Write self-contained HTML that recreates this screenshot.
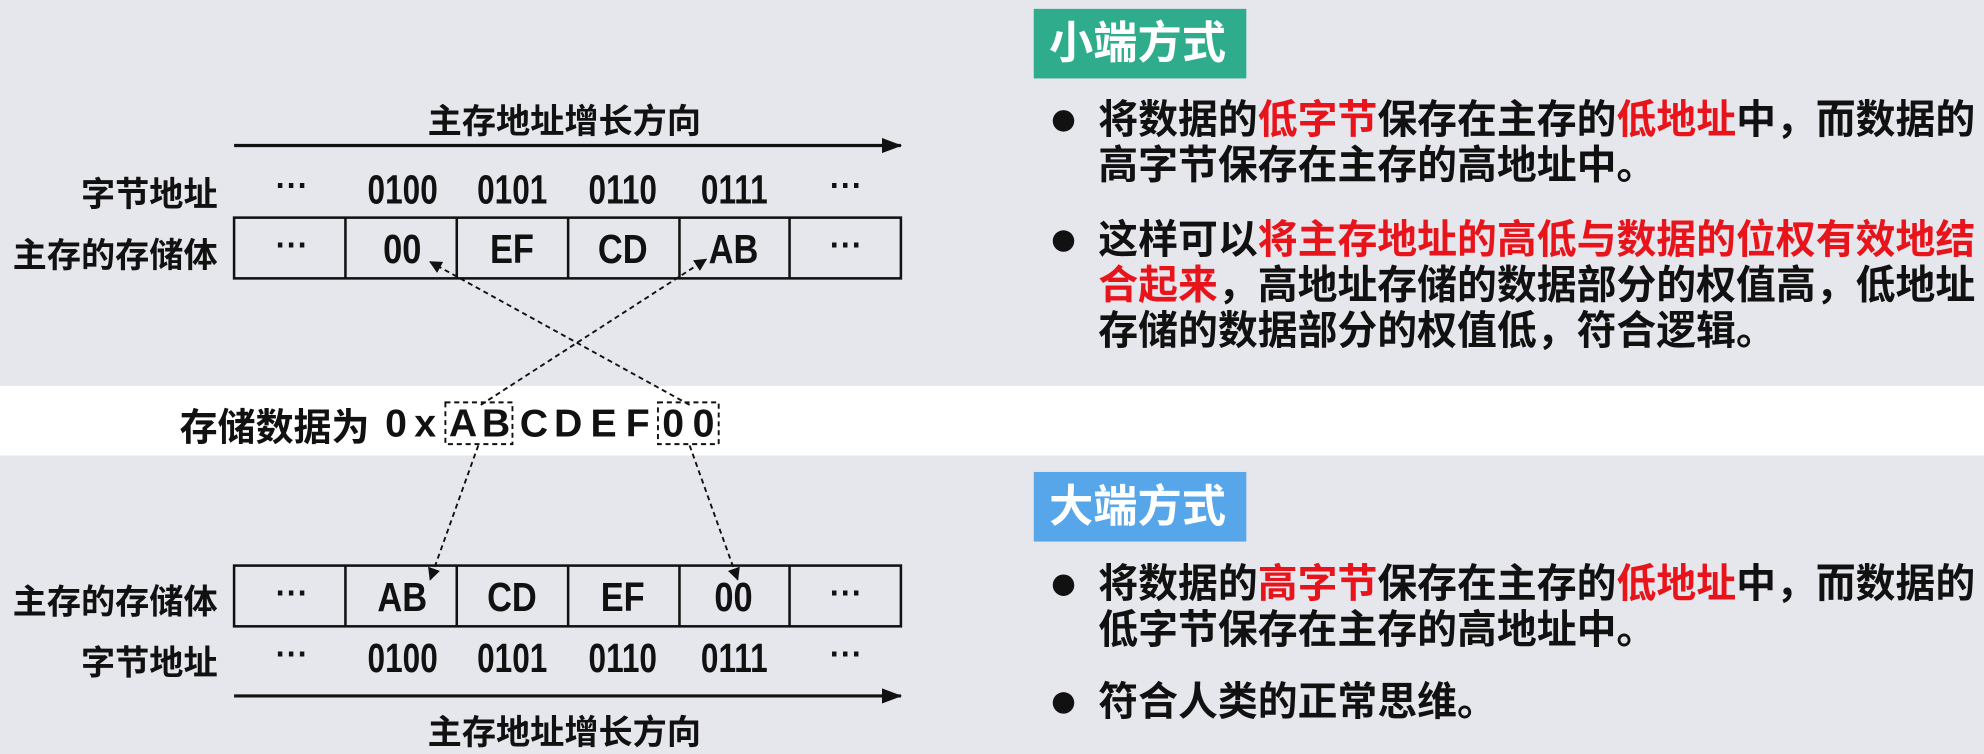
<!DOCTYPE html>
<html><head><meta charset="utf-8"><style>
html,body{margin:0;padding:0;width:1984px;height:740px;overflow:hidden;background:#e6e7ec}
#w{position:absolute;left:0;top:0;width:1568px;height:585px;transform:scale(1.26531);transform-origin:0 0;background:#e6e7ec;font-family:"Liberation Sans","Noto Sans CJK SC",sans-serif;font-weight:bold;color:#111}
.a{position:absolute;white-space:nowrap}
.r{color:#e8141c}
.tag{position:absolute;left:817px;width:168px;color:#fff;font-size:35px;line-height:55px;padding-left:12px;box-sizing:border-box}
.b{position:absolute;left:868px;font-size:31.5px;line-height:36px;width:700px}
.dot{position:absolute;left:832px;width:17px;height:17px;border-radius:50%;background:#111}
.lab{position:absolute;right:1396px;font-size:27px;white-space:nowrap}
</style></head><body><div id="w">
<div class="a" style="left:0;top:305px;width:1568px;height:55px;background:#fff"></div>
<svg class="a" style="left:0;top:0" width="1568" height="585" font-family="Liberation Sans, sans-serif" font-weight="bold">
<defs><marker id="m" markerWidth="10" markerHeight="10" refX="9" refY="5" orient="auto" markerUnits="userSpaceOnUse"><path d="M0,0 L10,5 L0,10z" fill="#111"/></marker>
<marker id="m2" markerWidth="16" markerHeight="12" refX="15" refY="6" orient="auto" markerUnits="userSpaceOnUse"><path d="M0,0 L16,6 L0,12z" fill="#111"/></marker></defs>
<g stroke="#111" stroke-width="2" fill="none">
<line x1="185" y1="115" x2="712" y2="115" stroke-width="2.5" marker-end="url(#m2)"/>
<rect x="185" y="172" width="527" height="48"/>
<line x1="273" y1="172" x2="273" y2="220"/><line x1="361" y1="172" x2="361" y2="220"/><line x1="449" y1="172" x2="449" y2="220"/><line x1="537" y1="172" x2="537" y2="220"/><line x1="624" y1="172" x2="624" y2="220"/>
<rect x="185" y="447" width="527" height="48"/>
<line x1="273" y1="447" x2="273" y2="495"/><line x1="361" y1="447" x2="361" y2="495"/><line x1="449" y1="447" x2="449" y2="495"/><line x1="537" y1="447" x2="537" y2="495"/><line x1="624" y1="447" x2="624" y2="495"/>
<line x1="185" y1="550" x2="712" y2="550" stroke-width="2.5" marker-end="url(#m2)"/>
<g stroke-dasharray="4,3" stroke-width="1.5">
<line x1="380" y1="320" x2="558" y2="205" marker-end="url(#m)"/>
<line x1="545" y1="320" x2="340" y2="207" marker-end="url(#m)"/>
<line x1="378" y1="352" x2="340" y2="458" marker-end="url(#m)"/>
<line x1="545" y1="352" x2="583" y2="458" marker-end="url(#m)"/>
<rect x="352" y="318" width="53" height="33"/>
<rect x="520" y="318" width="48" height="33"/>
</g></g>
<g font-size="32" text-anchor="middle" fill="#111">
<g transform="translate(0,161)"><text x="230" font-size="26" y="-6">⋯</text><g transform="scale(0.78,1)"><text x="408">0100</text><text x="519">0101</text><text x="631">0110</text><text x="744">0111</text></g><text x="668" font-size="26" y="-6">⋯</text></g>
<g transform="translate(0,208)"><text x="230" font-size="26" y="-6">⋯</text><g transform="scale(0.85,1)"><text x="374">00</text><text x="476">EF</text><text x="579">CD</text><text x="682">AB</text></g><text x="668" font-size="26" y="-6">⋯</text></g>
<g transform="translate(0,483)"><text x="230" font-size="26" y="-6">⋯</text><g transform="scale(0.85,1)"><text x="374">AB</text><text x="476">CD</text><text x="579">EF</text><text x="682">00</text></g><text x="668" font-size="26" y="-6">⋯</text></g>
<g transform="translate(0,531)"><text x="230" font-size="26" y="-6">⋯</text><g transform="scale(0.78,1)"><text x="408">0100</text><text x="519">0101</text><text x="631">0110</text><text x="744">0111</text></g><text x="668" font-size="26" y="-6">⋯</text></g>
</g>
<g font-size="31" fill="#111" text-anchor="middle" transform="translate(0,345)"><text x="313">0</text><text x="336">x</text><text x="366">A</text><text x="392">B</text><text x="422">C</text><text x="449">D</text><text x="477">E</text><text x="504">F</text><text x="532">0</text><text x="556">0</text></g>
</svg>
<div class="a" style="left:338px;top:74px;font-size:27px">主存地址增长方向</div>
<div class="a" style="left:338px;top:557px;font-size:27px">主存地址增长方向</div>
<div class="lab" style="top:132px">字节地址</div>
<div class="lab" style="top:180px">主存的存储体</div>
<div class="lab" style="top:454px">主存的存储体</div>
<div class="lab" style="top:502px">字节地址</div>
<div class="a" style="left:142px;top:313px;font-size:30px">存储数据为</div>

<div class="tag" style="top:7px;height:55px;background:#2fac8c">小端方式</div>
<div class="tag" style="top:373px;height:55px;background:#58a6ea">大端方式</div>

<div class="dot" style="top:87px"></div>
<div class="b" style="top:76px">将数据的<span class="r">低字节</span>保存在主存的<span class="r">低地址</span>中，而数据的<br>高字节保存在主存的高地址中。</div>
<div class="dot" style="top:182px"></div>
<div class="b" style="top:171px">这样可以<span class="r">将主存地址的高低与数据的位权有效地结合起来</span>，高地址存储的数据部分的权值高，低地址存储的数据部分的权值低，符合逻辑。</div>
<div class="dot" style="top:454px"></div>
<div class="b" style="top:443px">将数据的<span class="r">高字节</span>保存在主存的<span class="r">低地址</span>中，而数据的<br>低字节保存在主存的高地址中。</div>
<div class="dot" style="top:547px"></div>
<div class="b" style="top:536px">符合人类的正常思维。</div>
</div></body></html>
